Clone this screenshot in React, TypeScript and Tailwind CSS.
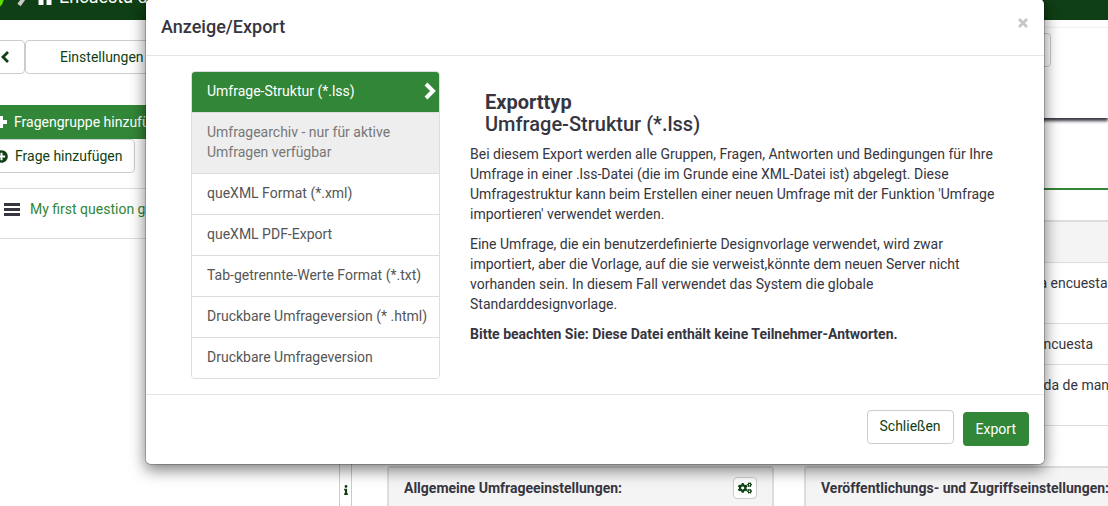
import React, { useState } from 'react';
import { FaCogs, FaInfo, FaPlusCircle } from 'react-icons/fa';

interface ExportOption {
  id: string;
  label: string;
  disabled?: boolean;
}

const exportOptions: ExportOption[] = [
  { id: 'lss', label: 'Umfrage-Struktur (*.lss)' },
  { id: 'archive', label: 'Umfragearchiv - nur für aktive Umfragen verfügbar', disabled: true },
  { id: 'quexml', label: 'queXML Format (*.xml)' },
  { id: 'quexmlpdf', label: 'queXML PDF-Export' },
  { id: 'tab', label: 'Tab-getrennte-Werte Format (*.txt)' },
  { id: 'html', label: 'Druckbare Umfrageversion (* .html)' },
  { id: 'print', label: 'Druckbare Umfrageversion' },
];

const surveyRows = [
  { text: 'la encuesta', tall: true },
  { text: 'encuesta', tall: false },
  { text: 'ada de manera', tall: true },
];

const TopBar: React.FC = () => (
  <header className="h-5 overflow-hidden bg-[#0f3f14]">
    <div className="flex h-14 -mt-[31px] items-center text-lg text-white whitespace-nowrap">
      <span className="size-7 -ml-6 shrink-0 rounded-full bg-[#5fdc00]"></span>
      <svg className="ml-3 h-6 w-3 shrink-0" viewBox="0 0 12 24">
        <path d="M11 9L3 20" stroke="#c9c9c9" strokeWidth="4" />
      </svg>
      <svg className="ml-2 h-5.5 w-[18px] shrink-0" viewBox="0 0 18 22" fill="currentColor">
        <path d="M9 3L18 11H15.500V19H10.500V14H7.500V19H2.500V11H0z" />
      </svg>
      <span className="ml-[5px]">Encuesta de</span>
    </div>
  </header>
);

const Sidebar: React.FC = () => (
  <aside className="w-[339px] shrink-0 pt-5">
    <div className="flex">
      <button
        type="button"
        aria-label="Zurück"
        className="flex h-[34px] w-[42px] -ml-[17px] items-center justify-end rounded border border-[#ccc] pr-[15px] text-[#0f3f14]"
      >
        <svg className="h-3 w-2" viewBox="0 0 8 12" fill="none" stroke="currentColor" strokeWidth="2.8">
          <path d="M7 1L2 6l5 5" />
        </svg>
      </button>
      <button type="button" className="h-[34px] flex-1 rounded border border-[#ccc] pl-[34px] text-left text-[#0f3f14]">
        Einstellungen
      </button>
    </div>
    <div className="mt-[31px] flex flex-col items-start -ml-[18px]">
      <button type="button" className="flex h-[34px] w-full items-center gap-[7px] rounded bg-[#328637] px-[13px] text-white">
        <svg className="size-3" viewBox="0 0 12 12" fill="currentColor">
          <path d="M4 0h4v4h4v4H8v4H4V8H0V4h4z" />
        </svg>
        Fragengruppe hinzufügen
      </button>
      <button
        type="button"
        className="flex h-[34px] items-center gap-[7px] rounded border border-[#ccc] pl-3 pr-[11px] text-[#0f3f14]"
      >
        <FaPlusCircle className="size-[13px]" />
        Frage hinzufügen
      </button>
    </div>
    <div className="mt-[15px] flex h-[51px] items-center border-y border-[#ddd] pl-1 pb-2">
      <svg className="h-[13px] w-4" viewBox="0 0 16 13" fill="currentColor">
        <path d="M0 0h16v3H0zM0 5h16v3H0zM0 10h16v3H0z" />
      </svg>
      <a href="#group" className="ml-[10px] pb-0.5 text-[#328637]">My first question group</a>
    </div>
  </aside>
);

const Panel: React.FC<{ title: string }> = ({ title }) => (
  <section className="w-[387px] shrink-0 rounded-t border-2 border-b-0 border-[#ddd]">
    <div className="flex h-10 items-center justify-between bg-[#f4f4f4] px-[15px]">
      <h2 className="font-bold whitespace-nowrap">{title}</h2>
      <button
        type="button"
        aria-label="Einstellungen bearbeiten"
        className="flex h-[22px] w-6 items-center justify-center rounded-sm border border-[#ccc] bg-white text-[#0f3f14]"
      >
        <FaCogs className="size-3.5" />
      </button>
    </div>
  </section>
);

const Content: React.FC = () => (
  <main className="min-w-0 flex-1">
    <div className="mt-[7px] h-[91px] border-t border-[#f2f2f2] pt-[5px] pr-[57px] shadow-[0_3px_3px_0px_#363540]">
      <div className="ml-auto h-[34px] w-40 rounded border border-[#ccc]"></div>
    </div>
    <div className="h-[72px] border-b-2 border-[#328637]"></div>
    <div className="pt-[30px] pl-[35px]">
      <table className="w-full table-fixed border-t-2 border-[#ddd]">
        <thead>
          <tr className="h-[41px] bg-[#f4f4f4]">
            <th className="w-[649px]"></th>
            <th></th>
          </tr>
        </thead>
        <tbody>
          {surveyRows.map((row) => (
            <tr key={row.text} className={`border-t border-[#ddd] ${row.tall ? 'h-[61px]' : 'h-[41px]'}`}>
              <td></td>
              <td className="align-top pt-2.5 whitespace-nowrap">{row.text}</td>
            </tr>
          ))}
          <tr className="border-t border-[#ddd]">
            <td colSpan={2} className="h-[41px]"></td>
          </tr>
        </tbody>
      </table>
      <div className="flex gap-[30px]">
        <Panel title="Allgemeine Umfrageeinstellungen:" />
        <Panel title="Veröffentlichungs- und Zugriffseinstellungen:" />
      </div>
    </div>
  </main>
);

const ExportDialog: React.FC = () => {
  const [selected, setSelected] = useState('lss');

  return (
    <div
      role="dialog"
      aria-labelledby="export-title"
      className="flex-1 rounded-md border border-black/20 bg-white bg-clip-padding shadow-[0_5px_15px_rgba(0,0,0,0.5)]"
    >
      <div className="flex h-[57px] items-center justify-between border-b border-[#e5e5e5] px-[15px]">
        <h1 id="export-title" className="text-lg font-medium">Anzeige/Export</h1>
        <button type="button" aria-label="Schließen" className="pb-2 text-[#c6c6c6]">
          <svg className="size-3" viewBox="0 0 12 12" stroke="currentColor" strokeWidth="2.8">
            <path d="M2 2l8 8M10 2l-8 8" />
          </svg>
        </button>
      </div>

      <div className="flex gap-[30px] px-[45px] py-[15px]">
        <div className="w-[249px] shrink-0 self-start overflow-hidden rounded border border-[#ddd]">
          {exportOptions.map((option) => {
            const active = option.id === selected;
            let colors = 'bg-white text-[#555]';
            if (active) colors = 'bg-[#328637] text-white';
            if (option.disabled) colors = 'bg-[#eee] text-[#777]';
            return (
              <button
                key={option.id}
                type="button"
                disabled={option.disabled}
                onClick={() => setSelected(option.id)}
                className={`flex w-full items-center border-b border-[#ddd] pt-[9px] pb-[11px] pl-[15px] text-left last:border-b-0 ${colors}`}
              >
                <span className="flex-1">{option.label}</span>
                {active && (
                  <svg
                    className="mr-[3px] h-[18px] w-3 shrink-0"
                    viewBox="0 0 12 18"
                    fill="none"
                    stroke="currentColor"
                    strokeWidth="4"
                  >
                    <path d="M2 2l7 7-7 7" />
                  </svg>
                )}
              </button>
            );
          })}
        </div>

        <div className="flex-1 pt-5">
          <h2 className="mb-[9px] pl-[15px] text-[20px] leading-[22px] font-medium">
            <strong className="font-bold">Exporttyp</strong>
            <br />
            Umfrage-Struktur (*.lss)
          </h2>
          <p className="mb-2.5">
            Bei diesem Export werden alle Gruppen, Fragen, Antworten und Bedingungen für Ihre Umfrage in einer
            .lss-Datei (die im Grunde eine XML-Datei ist) abgelegt. Diese Umfragestruktur kann beim Erstellen einer
            neuen Umfrage mit der Funktion 'Umfrage importieren' verwendet werden.
          </p>
          <p className="mb-2.5">
            Eine Umfrage, die ein benutzerdefinierte Designvorlage verwendet, wird zwar importiert, aber die Vorlage,
            auf die sie verweist,könnte dem neuen Server nicht vorhanden sein. In diesem Fall verwendet das System die
            globale Standarddesignvorlage.
          </p>
          <p className="font-bold">Bitte beachten Sie: Diese Datei enthält keine Teilnehmer-Antworten.</p>
        </div>
      </div>

      <div className="flex items-start justify-end gap-[9px] border-t border-[#e5e5e5] px-[15px] pt-[15px] pb-[18px]">
        <button type="button" className="h-[34px] rounded border border-[#ccc] px-3 pb-0.5 text-[#0f3f14]">
          Schließen
        </button>
        <button type="button" className="mt-0.5 h-[34px] rounded bg-[#328637] px-[13px] text-white">
          Export
        </button>
      </div>
    </div>
  );
};

const App: React.FC = () => {
  return (
    <div className="relative h-screen overflow-hidden bg-white font-['Roboto','Liberation_Sans',sans-serif] text-sm text-[#363540]">
      <TopBar />
      <div className="flex min-h-full">
        <Sidebar />
        <div className="flex w-[13px] shrink-0 items-center justify-center border-x border-[#ccc] pt-[434px] text-[#0f3f14]">
          <FaInfo className="size-2.5" />
        </div>
        <Content />
      </div>
      <div className="absolute inset-x-0 -top-0.5 flex pl-[145px] pr-[63px]">
        <ExportDialog />
      </div>
    </div>
  );
};

export default App;
